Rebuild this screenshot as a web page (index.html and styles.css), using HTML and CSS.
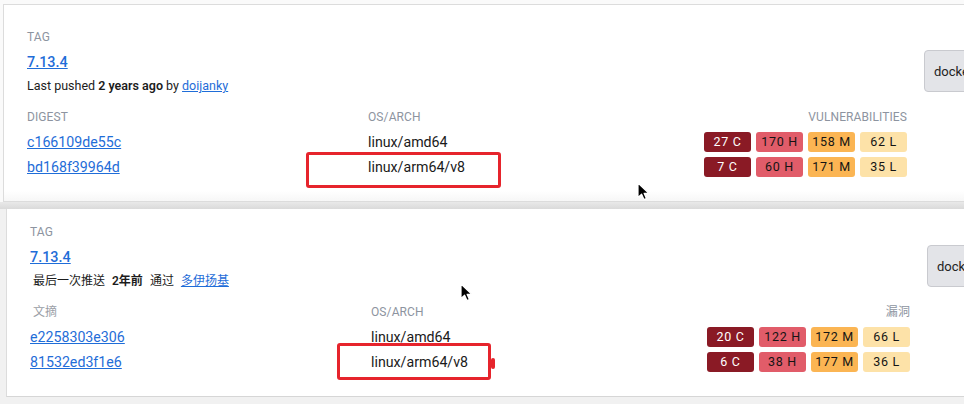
FILE: index.html
```html
<!DOCTYPE html>
<html lang="en">
<head>
<meta charset="utf-8">
<title>Tags</title>
<link rel="stylesheet" href="styles.css">
</head>
<body>
<div class="page">
  <section class="shot shot-en">
    <div class="card">
      <div class="card-body">
        <div class="main">
          <div class="label">TAG</div>
          <a class="tag-link" href="#">7.13.4</a>
          <div class="pushed">Last pushed <b>2 years ago</b> by <a href="#">doijanky</a></div>
          <div class="table">
            <div class="label">DIGEST</div>
            <div class="label">OS/ARCH</div>
            <div class="label right">VULNERABILITIES</div>

            <div class="cell"><a href="#">c166109de55c</a></div>
            <div class="cell">linux/amd64</div>
            <div class="cell badges"><span class="badge c">27 C</span><span class="badge h">170 H</span><span class="badge m">158 M</span><span class="badge l">62 L</span></div>

            <div class="cell"><a href="#">bd168f39964d</a></div>
            <div class="cell os-hl">linux/arm64/v8<span class="mark mark-en"></span></div>
            <div class="cell badges"><span class="badge c">7 C</span><span class="badge h">60 H</span><span class="badge m">171 M</span><span class="badge l">35 L</span></div>
          </div>
        </div>
        <div class="actions"><button class="cmd">docker pull doijanky/app:7.13.4</button></div>
      </div>
    </div>
    <svg class="cursor cursor-en" width="13" height="19" viewBox="0 0 13 19"><path d="M1 1 L1 15.5 L4.6 12.2 L7 17.6 L9.4 16.6 L7.1 11.3 L11.8 11.3 Z" fill="#000" stroke="#fff" stroke-width="1.2" stroke-linejoin="round"/></svg>
  </section>

  <div class="seam"></div>

  <section class="shot shot-zh">
    <div class="card">
      <div class="card-body">
        <div class="main">
          <div class="label">TAG</div>
          <a class="tag-link" href="#">7.13.4</a>
          <div class="pushed zh"><span class="seg">最后一次推送</span><b class="seg">2年前</b><span class="seg">通过</span><a href="#">多伊扬基</a></div>
          <div class="table">
            <div class="label zh-label">文摘</div>
            <div class="label">OS/ARCH</div>
            <div class="label right">漏洞</div>

            <div class="cell"><a href="#">e2258303e306</a></div>
            <div class="cell">linux/amd64</div>
            <div class="cell badges"><span class="badge c">20 C</span><span class="badge h">122 H</span><span class="badge m">172 M</span><span class="badge l">66 L</span></div>

            <div class="cell"><a href="#">81532ed3f1e6</a></div>
            <div class="cell os-hl">linux/arm64/v8<span class="mark mark-zh"><span class="tab"></span></span></div>
            <div class="cell badges"><span class="badge c">6 C</span><span class="badge h">38 H</span><span class="badge m">177 M</span><span class="badge l">36 L</span></div>
          </div>
        </div>
        <div class="actions"><button class="cmd">docker pull doijanky/app:7.13.4</button></div>
      </div>
    </div>
    <svg class="cursor cursor-zh" width="13" height="19" viewBox="0 0 13 19"><path d="M1 1 L1 15.5 L4.6 12.2 L7 17.6 L9.4 16.6 L7.1 11.3 L11.8 11.3 Z" fill="#000" stroke="#fff" stroke-width="1.2" stroke-linejoin="round"/></svg>
  </section>
</div>
</body>
</html>
```

FILE: styles.css
```css
html, body {
  margin: 0;
  padding: 0;
  overflow: hidden;
  background: #f6f6f6;
}

body {
  font-family: Roboto, "Noto Sans CJK SC", sans-serif;
  color: #262626;
  width: 964px;
  height: 404px;
}

.page {
  display: flex;
  flex-direction: column;
  width: 964px;
  height: 404px;
  overflow: hidden;
}

.shot {
  position: relative;
  flex: none;
}

.shot-en {
  padding: 4px 0 0 3px;
  background: #fafafa;
}

.shot-zh {
  padding: 0 0 0 6px;
  background: #f1f1f1;
  flex: 1;
}

.card {
  width: 1100px;
  background: #fff;
  border: 1px solid #dcdcdc;
  border-right: none;
  padding: 24px 0 22px 23px;
  box-sizing: border-box;
}

.shot-en .card {
  background: linear-gradient(#fff 0, #fff 186px, #f5f5f5 198px);
}

.shot-zh .card {
  border-top: none;
  padding-top: 15px;
  padding-bottom: 22px;
  border-bottom-color: #d6d6d6;
}

.seam {
  height: 7px;
  flex: none;
  background: linear-gradient(#e9e9e9, #dadada);
}

.card-body {
  display: flex;
  gap: 17px;
  align-items: flex-start;
}

.main {
  width: 880px;
  flex: none;
}

.label {
  font-size: 12px;
  line-height: 16px;
  color: #8d94a0;
  letter-spacing: 0.1px;
}

.label.right {
  text-align: right;
}

.zh-label {
  padding-left: 3px;
  color: #9a9ea6;
}

a {
  color: #1f6dd8;
  text-decoration: underline;
}

.tag-link {
  display: inline-block;
  margin-top: 8px;
  font-size: 14.4px;
  line-height: 20px;
  font-weight: 500;
}

.pushed {
  margin-top: 5px;
  font-size: 12.5px;
  line-height: 16px;
  color: #1c1c1c;
}

.pushed b {
  font-weight: 600;
}

.pushed.zh {
  display: flex;
  padding-left: 3px;
  font-size: 12px;
}

.pushed.zh .seg {
  margin-right: 7px;
}

.table {
  margin-top: 15px;
  display: grid;
  grid-template-columns: 341px 1fr auto;
  grid-auto-rows: 25px;
  grid-template-rows: 20px;
}

.table > .label {
  align-self: start;
}

.cell {
  font-size: 14.2px;
  display: flex;
  align-items: center;
  color: #1a1a1a;
}

.os-hl {
  position: relative;
}

.badges {
  gap: 5px;
  justify-content: flex-end;
}

.badge {
  width: 47px;
  height: 20px;
  line-height: 20px;
  border-radius: 3px;
  font-size: 12.5px;
  text-align: center;
  letter-spacing: 0.7px;
  color: #141414;
}

.badge.c { background: #8a1a25; color: #fff; }
.badge.h { background: #e15c69; }
.badge.m { background: #fbb553; }
.badge.l { background: #fde2a8; }

.actions {
  margin-top: 21px;
  flex: none;
}

.cmd {
  height: 42px;
  padding: 0 9px;
  background: #e3e4e8;
  border: 1px solid #c9cacf;
  border-radius: 4px;
  font-family: Roboto, sans-serif;
  font-size: 13px;
  color: #222;
  white-space: nowrap;
  width: 320px;
  text-align: left;
}

.mark {
  position: absolute;
  border: 3px solid #e6242c;
  border-radius: 3px;
  box-sizing: border-box;
}

.mark-en {
  left: -62px;
  top: -2px;
  width: 195px;
  height: 36px;
}

.mark-zh {
  left: -34px;
  top: -6px;
  width: 154px;
  height: 37px;
}

.mark-zh .tab {
  position: absolute;
  right: -7px;
  top: 12px;
  width: 4px;
  height: 11px;
  border-radius: 2px;
  background: #e6242c;
}

.cursor {
  position: absolute;
}

.cursor-en {
  left: 637px;
  top: 182px;
}

.cursor-zh {
  left: 460px;
  top: 74px;
}
```
